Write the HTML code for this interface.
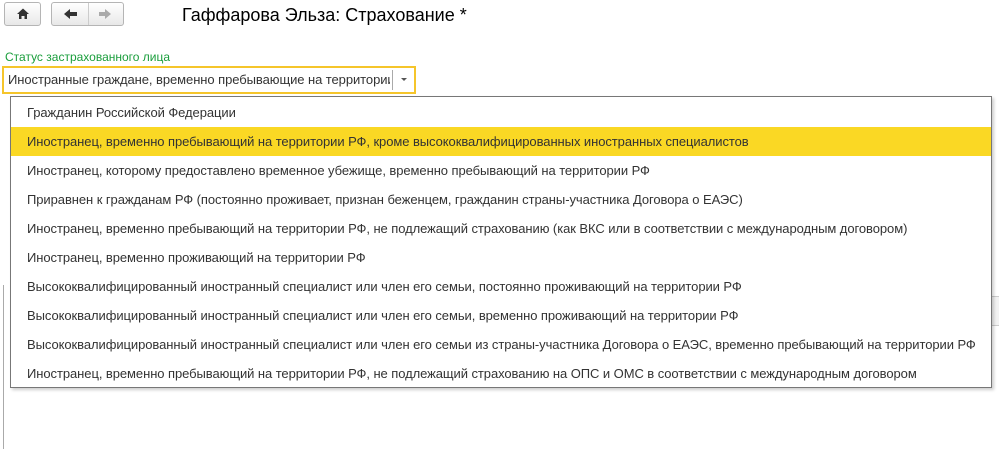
<!DOCTYPE html>
<html><head><meta charset="utf-8"><style>
body{margin:0;width:999px;height:449px;background:#fff;font-family:"Liberation Sans",Arial,sans-serif;position:relative;overflow:hidden}
.btn{position:absolute;top:2px;height:24px;border:1px solid #b5b5b5;border-radius:3px;background:linear-gradient(#fff,#e8e8e8);box-sizing:border-box}
.t{position:absolute;font-size:13px;color:#333;white-space:nowrap}
.pop{position:absolute;left:10px;top:96px;width:982px;height:292px;border:1px solid #777;box-sizing:border-box;background:#fff;box-shadow:2px 2px 3px rgba(0,0,0,.2)}
.row{height:29px;line-height:29px;padding-left:16px;font-size:13px;color:#333;white-space:nowrap;letter-spacing:-0.07px}
.sel{background:#fad824}
</style></head><body>
<div class="btn" style="left:4px;width:37px"><svg width="37" height="22" viewBox="0 0 37 22"><path d="M12 11 L18 5.5 L24 11 H22 V16 H19.5 V13 H16.5 V16 H14 V11Z" fill="#333"/></svg></div>
<div class="btn" style="left:51px;width:73px"><div style="position:absolute;left:36px;top:0;bottom:0;border-left:1px solid #ccc"></div>
<svg width="73" height="22" viewBox="0 0 73 22"><path d="M12 11 L18 6 V9 H25 V13 H18 V16Z" fill="#333"/><path d="M59 11 L53 6 V9 H47 V13 H53 V16Z" fill="#aaa"/></svg></div>
<div class="t" style="left:182px;top:5px;font-size:18px;color:#000">Гаффарова Эльза: Страхование *</div>
<div class="t" style="left:5px;top:50px;font-size:12px;color:#1a9e3c">Статус застрахованного лица</div>
<div style="position:absolute;left:2px;top:66px;width:414px;height:28px;border:2px solid #f5c52b;box-sizing:border-box"></div>
<div style="position:absolute;left:392px;top:70px;height:20px;border-left:1px solid #aaa"></div>
<div class="t" style="left:8px;top:72px;width:382px;overflow:hidden;letter-spacing:-0.07px">Иностранные граждане, временно пребывающие на территории РФ</div>
<div style="position:absolute;left:401px;top:78px;border:3px solid transparent;border-top:3px solid #555"></div>
<div style="position:absolute;left:3px;top:285px;height:164px;border-left:1px solid #aaa"></div>
<div style="position:absolute;left:990px;top:296px;width:9px;height:28px;border-top:1px solid #ccc;border-bottom:1px solid #ccc;background:#f2f2f2"></div>
<div class="pop">
<div class="row" style="margin-top:1px">Гражданин Российской Федерации</div>
<div class="row sel">Иностранец, временно пребывающий на территории РФ, кроме высококвалифицированных иностранных специалистов</div>
<div class="row">Иностранец, которому предоставлено временное убежище, временно пребывающий на территории РФ</div>
<div class="row">Приравнен к гражданам РФ (постоянно проживает, признан беженцем, гражданин страны-участника Договора о ЕАЭС)</div>
<div class="row">Иностранец, временно пребывающий на территории РФ, не подлежащий страхованию (как ВКС или в соответствии с международным договором)</div>
<div class="row">Иностранец, временно проживающий на территории РФ</div>
<div class="row">Высококвалифицированный иностранный специалист или член его семьи, постоянно проживающий на территории РФ</div>
<div class="row">Высококвалифицированный иностранный специалист или член его семьи, временно проживающий на территории РФ</div>
<div class="row">Высококвалифицированный иностранный специалист или член его семьи из страны-участника Договора о ЕАЭС, временно пребывающий на территории РФ</div>
<div class="row">Иностранец, временно пребывающий на территории РФ, не подлежащий страхованию на ОПС и ОМС в соответствии с международным договором</div>
</div>
</body></html>
